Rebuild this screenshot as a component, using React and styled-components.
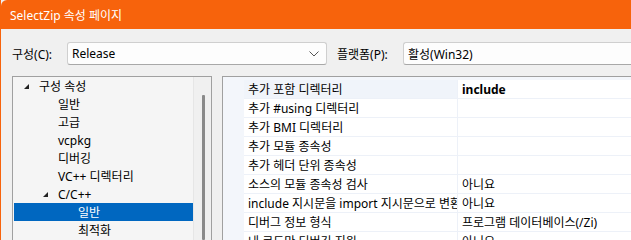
import React from "react"
import styled, { createGlobalStyle } from "styled-components"

const GlobalStyle = createGlobalStyle`
  html, body { margin: 0; padding: 0; background: #f0f0f0; }
  body {
    font-family: "Segoe UI", "Noto Sans", "Noto Sans CJK KR", sans-serif;
    font-size: 12px;
    color: #000;
  }
`;

const Window = styled.div`
  width: 631px;
  height: 240px;
  overflow: hidden;
  display: flex;
  flex-direction: column;
  border-left: 1px solid #f7630c;
  box-sizing: border-box;
  background: #f0f0f0;
`;

const TitleBar = styled.div`
  height: 29px;
  flex: none;
  background: #f7630c;
  color: #fff;
  display: flex;
  align-items: center;
  padding-left: 9px;
  border-top-left-radius: 6px;
  font-size: 12px;
`;

const Body = styled.div`
  flex: 1;
  display: flex;
  flex-direction: column;
  padding: 13px 0 0 11px;
  min-height: 0;
`;

const ConfigRow = styled.div`
  display: flex;
  align-items: center;
  height: 23px;
  flex: none;
`;

const Label = styled.span`
  width: ${p => p.w}px;
  flex: none;
  white-space: nowrap;
`;

const Combo = styled.div`
  width: ${p => p.w ? `${p.w}px` : 'auto'};
  flex: ${p => p.w ? 'none' : '1'};
  height: 23px;
  box-sizing: border-box;
  background: #fdfdfd;
  border: 1px solid #cfcfcf;
  border-bottom-color: #a8a8a8;
  border-right: ${p => p.w ? '1px solid #cfcfcf' : 'none'};
  border-radius: ${p => p.w ? '3px' : '3px 0 0 3px'};
  display: flex;
  align-items: center;
  padding-left: 4px;
  margin-right: ${p => p.mr || 0}px;
`;

const ComboText = styled.span`
  flex: 1;
`;

const Chevron = () => (
  <svg width="14" height="8" viewBox="0 0 14 8" style={{ marginRight: 5 }}>
    <path d="M2.5 1.5 L7 6 L11.5 1.5" fill="none" stroke="#555" strokeWidth="1" />
  </svg>
)

const Panels = styled.div`
  flex: 1;
  display: flex;
  gap: 10px;
  margin-top: 11px;
  min-height: 0;
`;

const TreePanel = styled.div`
  width: 200px;
  flex: none;
  box-sizing: border-box;
  border: 1px solid #a0a0a0;
  border-bottom: none;
  background: #f5f5f5;
  display: flex;
`;

const TreeList = styled.div`
  flex: 1;
  padding-left: 1px;
`;

const TreeRow = styled.div`
  height: 18px;
  display: flex;
  align-items: center;
  padding-left: ${p => p.indent}px;
  background: ${p => p.selected ? '#0067c0' : 'transparent'};
  color: ${p => p.selected ? '#fff' : '#000'};
  white-space: nowrap;
`;

const Expander = styled.span`
  width: 16px;
  flex: none;
  display: flex;
  align-items: center;
`;

const ScrollTrack = styled.div`
  width: 17px;
  flex: none;
  background: #f0f0f0;
  border-left: 1px solid #e6e6e6;
  display: flex;
  justify-content: center;
  padding-top: 18px;
`;

const Thumb = styled.div`
  width: 3px;
  height: 100%;
  background: #8a8a8a;
  border-radius: 1px;
  margin-left: 1px;
`;

const GridPanel = styled.div`
  flex: 1;
  box-sizing: border-box;
  border: 1px solid #a0a0a0;
  border-right: none;
  border-bottom: none;
  background: #f3f6fb;
  padding-top: 3px;
  display: flex;
  flex-direction: column;
`;

const GridRow = styled.div`
  display: grid;
  grid-template-columns: 21px 214px 1fr;
  height: 19px;
  flex: none;
`;

const Cell = styled.div`
  box-sizing: border-box;
  border-bottom: 1px solid #edf1f8;
  border-right: ${p => p.name ? '1px solid #edf1f8' : 'none'};
  background: ${p => p.hl ? '#f0f4fa' : '#fff'};
  padding-left: 4px;
  display: flex;
  align-items: center;
  white-space: nowrap;
  overflow: hidden;
  font-weight: ${p => p.bold ? 700 : 400};
`;

const Gutter = styled.div`
  background: #f3f6fb;
`;

const Triangle = () => (
  <svg width="7" height="7" viewBox="0 0 7 7">
    <path d="M6 1 L6 6 L1 6 Z" fill="#222" />
  </svg>
)

const tree = [
  { label: '구성 속성', indent: 9, open: true },
  { label: '일반', indent: 44 },
  { label: '고급', indent: 44 },
  { label: 'vcpkg', indent: 44 },
  { label: '디버깅', indent: 44 },
  { label: 'VC++ 디렉터리', indent: 44 },
  { label: 'C/C++', indent: 28, open: true },
  { label: '일반', indent: 64, selected: true },
  { label: '최적화', indent: 64 },
]

const props = [
  ['추가 포함 디렉터리', 'include'],
  ['추가 #using 디렉터리', ''],
  ['추가 BMI 디렉터리', ''],
  ['추가 모듈 종속성', ''],
  ['추가 헤더 단위 종속성', ''],
  ['소스의 모듈 종속성 검사', '아니요'],
  ['include 지시문을 import 지시문으로 변환', '아니요'],
  ['디버그 정보 형식', '프로그램 데이터베이스(/Zi)'],
  ['내 코드만 디버깅 지원', '아니요'],
]

const App = () => {
  return (<Window>
    <GlobalStyle />
    <TitleBar>SelectZip 속성 페이지</TitleBar>
    <Body>
      <ConfigRow>
        <Label w={55}>구성(C):</Label>
        <Combo w={260} mr={10}>
          <ComboText>Release</ComboText>
          <Chevron />
        </Combo>
        <Label w={66}>플랫폼(P):</Label>
        <Combo>
          <ComboText>활성(Win32)</ComboText>
        </Combo>
      </ConfigRow>
      <Panels>
        <TreePanel>
          <TreeList>
            {tree.map((t, i) => (
              <TreeRow key={i} indent={t.indent} selected={t.selected}>
                {t.open && <Expander><Triangle /></Expander>}
                {t.label}
              </TreeRow>
            ))}
          </TreeList>
          <ScrollTrack><Thumb /></ScrollTrack>
        </TreePanel>
        <GridPanel>
          {props.map(([name, value], i) => (
            <GridRow key={i}>
              <Gutter />
              <Cell name hl={i === 0}>{name}</Cell>
              <Cell bold={i === 0}>{value}</Cell>
            </GridRow>
          ))}
        </GridPanel>
      </Panels>
    </Body>
  </Window>)
}

export default App
